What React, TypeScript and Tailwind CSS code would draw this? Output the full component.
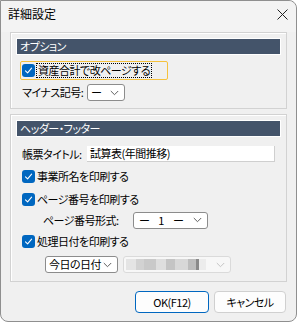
import React from 'react';

const font = "font-['Noto_Sans_CJK_JP','Noto_Sans',sans-serif] [font-feature-settings:'palt']";

function Check() {
  return (
    <span className="w-[13px] h-[13px] rounded-[3px] bg-[#0067c0] flex items-center justify-center shrink-0">
      <svg width="9" height="9" viewBox="0 0 9 9" fill="none">
        <path d="M1.5 4.8 L3.6 6.8 L7.6 2.2" stroke="#fff" strokeWidth="1.1" strokeLinecap="round" strokeLinejoin="round" />
      </svg>
    </span>
  );
}

function Chevron({ color = '#5f5f5f' }: { color?: string }) {
  return (
    <svg width="9" height="6" viewBox="0 0 9 6" fill="none" className="shrink-0">
      <path d="M0.8 1 L4.5 4.7 L8.2 1" stroke={color} strokeWidth="1" />
    </svg>
  );
}

function Select({ children, className }: { children: React.ReactNode; className: string }) {
  return (
    <div
      className={`h-[17px] bg-white border border-[#8c8c8c] rounded-[3px] flex items-center justify-between pl-[3px] pr-[5px] ${className}`}
    >
      {children}
      <Chevron />
    </div>
  );
}

function Header({ label }: { label: string }) {
  return (
    <div className="h-[17px] bg-[#44546a] border border-white flex items-center px-[3px] text-white leading-none whitespace-nowrap">
      {label}
    </div>
  );
}

function CheckRow({ label, className }: { label: string; className: string }) {
  return (
    <div className={`h-[16px] flex items-center gap-[2px] pl-[6px] ${className}`}>
      <Check />
      <span className="leading-none whitespace-nowrap">{label}</span>
    </div>
  );
}

export default function App() {
  return (
    <div className={`w-[300px] h-[323px] bg-white text-[11px] tracking-[-0.5px] text-black ${font}`}>
      <div className="w-[297px] h-[322px] bg-[#f0f0f0] border border-[#8f8f8f] rounded-tr-[8px] rounded-b-[8px] flex flex-col">
        {/* タイトルバー */}
        <div className="h-[31px] flex items-start justify-between pl-[7px] pr-[4px] pt-[7px] bg-[#f3f3f3] rounded-tr-[8px]">
          <span className="leading-none text-[12px] tracking-normal">詳細設定</span>
          <svg width="11" height="11" viewBox="0 0 11 11" className="mt-[1px] mr-[4px]">
            <path d="M0.5 0.5 L10.5 10.5 M10.5 0.5 L0.5 10.5" stroke="#222" strokeWidth="1" />
          </svg>
        </div>

        <div className="px-[9px]">
          {/* オプション */}
          <div className="border border-[#d2d2d2] shadow-[inset_1px_1px_0_#fff] px-[5px] pt-[5px] pb-[7px]">
            <Header label="オプション" />
            <div className="mt-[6px] ml-[4px] w-[148px] h-[19px] border border-[#f5c23e] rounded-[2px] flex items-center pl-[1px] gap-[1px]">
              <Check />
              <span className="border border-dotted border-black leading-none px-[1px] py-[1px] whitespace-nowrap">資産合計で改ページする</span>
            </div>
            <div className="mt-[4px] ml-[6px] flex items-center">
              <span className="w-[65px] leading-none whitespace-nowrap">マイナス記号:</span>
              <Select className="w-[38px]">
                <span className="leading-none">ー</span>
              </Select>
            </div>
          </div>

          {/* ヘッダー・フッター */}
          <div className="mt-[5px] border border-[#d2d2d2] shadow-[inset_1px_1px_0_#fff] px-[5px] pt-[5px] pb-[8px]">
            <Header label="ヘッダー・フッター" />
            <div className="mt-[9px] ml-[6px] h-[16px] flex items-center">
              <span className="w-[65px] leading-none whitespace-nowrap">帳票タイトル:</span>
              <div className="flex-1 h-[16px] bg-white border-b border-r border-[#cfcfcf] flex items-center pl-[3px] mr-[6px]">
                <span className="leading-none whitespace-nowrap">試算表(年間推移)</span>
              </div>
            </div>
            <CheckRow label="事業所名を印刷する" className="mt-[6px]" />
            <CheckRow label="ページ番号を印刷する" className="mt-[7px]" />
            <div className="mt-[5px] ml-[27px] h-[16px] flex items-center">
              <span className="w-[90px] leading-none whitespace-nowrap">ページ番号形式:</span>
              <Select className="w-[75px] h-[16px]">
                <span className="leading-none flex items-center gap-[9px] pl-[2px]">
                  <span>ー</span>
                  <span>1</span>
                  <span>ー</span>
                </span>
              </Select>
            </div>
            <CheckRow label="処理日付を印刷する" className="mt-[5px]" />
            <div className="mt-[7px] ml-[29px] flex items-center gap-[5px]">
              <Select className="w-[73px]">
                <span className="leading-none whitespace-nowrap">今日の日付</span>
              </Select>
              <div className="w-[108px] h-[17px] bg-[#f7f7f7] border border-[#dadada] rounded-[3px] flex items-center pr-[5px]">
                <div className="flex-1 h-[11px] flex ml-[2px] mr-[10px]">
                  <div className="w-[10px] bg-[#e4e4e4]" />
                  <div className="w-[8px] bg-[#d2d2d2]" />
                  <div className="w-[12px] bg-[#c9c9c9]" />
                  <div className="w-[10px] bg-[#dedede]" />
                  <div className="w-[9px] bg-[#c4c4c4]" />
                  <div className="w-[13px] bg-[#d8d8d8]" />
                  <div className="w-[8px] bg-[#bdbdbd]" />
                  <div className="w-[3px] bg-[#8a8a8a]" />
                  <div className="flex-1 bg-[#ececec]" />
                </div>
                <Chevron color="#c4c4c4" />
              </div>
            </div>
          </div>

          {/* ボタン */}
          <div className="mt-[9px] flex justify-end gap-[5px] pr-[1px]">
            <button className="w-[74px] h-[22px] bg-[#fdfdfd] border border-[#0067c0] rounded-[4px] flex items-center justify-center leading-none">
              OK(F12)
            </button>
            <button className="w-[72px] h-[22px] bg-[#fdfdfd] border border-[#d0d0d0] rounded-[4px] flex items-center justify-center leading-none">
              キャンセル
            </button>
          </div>
        </div>
      </div>
    </div>
  );
}
